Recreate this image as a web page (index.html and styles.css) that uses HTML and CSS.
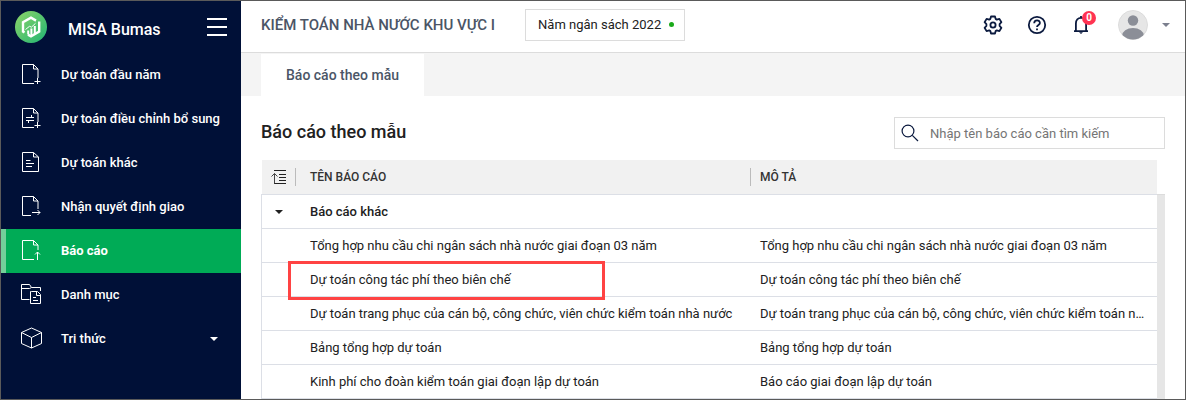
FILE: index.html
```html
<!DOCTYPE html>
<html lang="vi">
<head>
    <meta charset="UTF-8">
    <title>MISA Bumas - Báo cáo</title>
    <meta name="viewport" content="width=device-width, initial-scale=1.0">
    <link rel="stylesheet" href="styles.css">
</head>
<body>
    <div class="app">
        <!-- Sidebar -->
        <aside class="sidebar">
            <div class="brand">
                <svg class="logo" width="32" height="32" viewBox="0 0 32 32">
                    <defs>
                        <linearGradient id="logo-bg" x1="0" y1="0" x2="1" y2="1">
                            <stop offset="0" stop-color="#8fd468"/>
                            <stop offset="1" stop-color="#1fb574"/>
                        </linearGradient>
                    </defs>
                    <circle cx="16" cy="16" r="16" fill="url(#logo-bg)"/>
                    <g fill="none" stroke="#fff">
                        <path d="M9.5 21.5L8 20.6V11.3L16 6.7l5 2.9M24.2 10.5v10.1L16 25.3l-3-1.7" stroke-width="2.4"/>
                        <path d="M13.2 19.5v4M16.4 17.5v7.5M19.8 15v8" stroke-width="2"/>
                        <path d="M10.5 18.5l4-3.2 2 .8 4-3.8" stroke-width="1"/>
                    </g>
                </svg>
                <span class="brand-name">MISA Bumas</span>
                <button class="menu-toggle" type="button" aria-label="Menu">
                    <svg width="20" height="20" viewBox="0 0 20 20" stroke="#fff" stroke-width="2"><path d="M0 2h20M0 10h20M0 18h20"/></svg>
                </button>
            </div>
            <nav class="nav">
                <a class="nav-item" href="#">
                    <svg class="nav-icon" viewBox="0 0 22 22"><path d="M13 20.5H1.5v-19h11L17 6v9M12.5 1.5V6H17M16.5 15v6M13.5 18.5h6"/></svg>
                    <span>Dự toán đầu năm</span>
                </a>
                <a class="nav-item" href="#">
                    <svg class="nav-icon" viewBox="0 0 22 22"><path d="M13 20.5H1.5v-19h11L17 6v9M12.5 1.5V6H17M16.5 15v6M13.5 18.5h6M5 10.5h8M10.5 8v2.5M13 13.5H5M7.5 13.5V16"/></svg>
                    <span>Dự toán điều chỉnh bổ sung</span>
                </a>
                <a class="nav-item" href="#">
                    <svg class="nav-icon" viewBox="0 0 22 22"><path d="M1.5 1.5h11L17.5 6v14.5h-16zM12.5 1.5V6h5M5 9.5h4.5M5 12.5h8M5 15.5h6"/></svg>
                    <span>Dự toán khác</span>
                </a>
                <a class="nav-item" href="#">
                    <svg class="nav-icon" viewBox="0 0 22 22"><path d="M10 20.5H1.5v-19h11L17 6v8M12.5 1.5V6H17M11 17.5h8M16.5 15l2.5 2.5-2.5 2.5"/></svg>
                    <span>Nhận quyết định giao</span>
                </a>
                <a class="nav-item active" href="#">
                    <svg class="nav-icon" viewBox="0 0 22 22"><path d="M13 20.5H1.5v-19h11L17 6v5M12.5 1.5V6H17M16.5 21v-8M14 15.5l2.5-2.5 2.5 2.5"/></svg>
                    <span>Báo cáo</span>
                </a>
                <a class="nav-item" href="#">
                    <svg class="nav-icon" viewBox="0 0 22 22"><path d="M8.5 16.5H.5v-15h8l2 3h9V8M.5 5.500h8l2-1M10.500 8.500h6l3 3v9h-10v-12zM15.500 8.500v4h4M12 14.500h3M12 17.500h5"/></svg>
                    <span>Danh mục</span>
                </a>
                <a class="nav-item" href="#">
                    <svg class="nav-icon" viewBox="0 0 22 22"><path d="M10.5 1L20.5 5.5v11L10.5 21 .5 16.5v-11zM.5 5.5l10 5 10-5M10.5 10.5V21"/></svg>
                    <span>Tri thức</span>
                    <i class="caret"></i>
                </a>
            </nav>
        </aside>

        <main class="main">
            <!-- Top bar -->
            <header class="topbar">
                <div class="org">KIỂM TOÁN NHÀ NƯỚC KHU VỰC I</div>
                <button class="year" type="button">Năm ngân sách 2022<i class="dot"></i></button>
                <div class="tools">
                    <button class="tool" type="button" aria-label="Thiết lập">
                        <svg width="20" height="20" viewBox="0 0 20 20" fill="none" stroke="#0b1a3f" stroke-width="1.8" stroke-linejoin="round">
                            <path d="M8 1.5h4l.6 2.4 1.2.7 2.6-.7 2 3.3-1.8 1.900v1.800l1.800 1.900-2 3.300-2.600-.700-1.200.700-.600 2.400H8l-.600-2.400-1.200-.700-2.600.700-2-3.300 1.800-1.900V9.100L1.600 7.200l2-3.300 2.600.700 1.200-.700z"/>
                            <circle cx="10" cy="10" r="2.6"/>
                        </svg>
                    </button>
                    <button class="tool" type="button" aria-label="Trợ giúp">
                        <svg width="20" height="20" viewBox="0 0 20 20" fill="none" stroke="#0b1a3f" stroke-width="1.8">
                            <circle cx="10" cy="10" r="8.2"/>
                            <path d="M7.2 8.3C7.2 4.3 12.9 4.5 12.9 8c0 2-2.9 2-2.9 4M10 13.4v1.8"/>
                        </svg>
                    </button>
                    <button class="tool" type="button" aria-label="Thông báo">
                        <svg width="20" height="20" viewBox="0 0 20 20" fill="none" stroke="#0b1a3f" stroke-width="1.8">
                            <path d="M3 16.1h14M4.9 16V8.5C4.9 5 7 2.9 10 2.9s5.1 2.1 5.1 5.6V16M10 3V1"/>
                            <path d="M8 17.3h4L10 19z" fill="#0b1a3f" stroke="none"/>
                        </svg>
                        <span class="badge">0</span>
                    </button>
                    <button class="user" type="button" aria-label="Tài khoản">
                        <svg width="30" height="30" viewBox="0 0 30 30">
                            <defs><clipPath id="face"><circle cx="15" cy="15" r="14.5"/></clipPath></defs>
                            <circle cx="15" cy="15" r="14.5" fill="#e6e6e6" stroke="#dcdcdc"/>
                            <g fill="#8b8e97" clip-path="url(#face)">
                                <circle cx="15" cy="10.5" r="5.2"/>
                                <ellipse cx="15" cy="26" rx="11" ry="8"/>
                            </g>
                        </svg>
                        <i class="caret"></i>
                    </button>
                </div>
            </header>

            <div class="tabs">
                <a class="tab" href="#">Báo cáo theo mẫu</a>
            </div>

            <section class="content">
                <div class="content-head">
                    <h1>Báo cáo theo mẫu</h1>
                    <label class="search">
                        <svg width="18" height="18" viewBox="0 0 18 18" fill="none" stroke="#0b1a3f" stroke-width="1.2">
                            <circle cx="7" cy="7" r="5.9"/>
                            <path d="M11.3 11.3L17 17"/>
                        </svg>
                        <input type="text" placeholder="Nhập tên báo cáo cần tìm kiếm" aria-label="Tìm kiếm báo cáo">
                    </label>
                </div>

                <div class="grid">
                    <div class="grid-body">
                        <table class="reports">
                            <colgroup>
                                <col class="col-toggle">
                                <col class="col-name">
                                <col>
                            </colgroup>
                            <thead>
                                <tr>
                                    <th>
                                        <button class="collapse" type="button" aria-label="Thu gọn">
                                            <svg width="16" height="16" viewBox="0 0 16 16" fill="none" stroke="#222">
                                                <path d="M3 1.5h12M8 5.5h7M8 8.5h7M8 11.5h7M3 14.5h12"/>
                                                <path d="M3.5 14.5V4.5M.5 7.5l3-3 3 3" stroke="#444"/>
                                            </svg>
                                        </button>
                                    </th>
                                    <th><span>TÊN BÁO CÁO</span></th>
                                    <th><span>MÔ TẢ</span></th>
                                </tr>
                            </thead>
                            <tbody>
                                <tr class="group">
                                    <td><button class="collapse" type="button" aria-label="Báo cáo khác"><i class="caret"></i></button></td>
                                    <td>Báo cáo khác</td>
                                    <td></td>
                                </tr>
                                <tr>
                                    <td></td>
                                    <td>Tổng hợp nhu cầu chi ngân sách nhà nước giai đoạn 03 năm</td>
                                    <td>Tổng hợp nhu cầu chi ngân sách nhà nước giai đoạn 03 năm</td>
                                </tr>
                                <tr>
                                    <td></td>
                                    <td class="marked">Dự toán công tác phí theo biên chế</td>
                                    <td>Dự toán công tác phí theo biên chế</td>
                                </tr>
                                <tr>
                                    <td></td>
                                    <td>Dự toán trang phục của cán bộ, công chức, viên chức kiểm toán nhà nước</td>
                                    <td>Dự toán trang phục của cán bộ, công chức, viên chức kiểm toán nhà nước</td>
                                </tr>
                                <tr>
                                    <td></td>
                                    <td>Bảng tổng hợp dự toán</td>
                                    <td>Bảng tổng hợp dự toán</td>
                                </tr>
                                <tr>
                                    <td></td>
                                    <td>Kinh phí cho đoàn kiểm toán giai đoạn lập dự toán</td>
                                    <td>Báo cáo giai đoạn lập dự toán</td>
                                </tr>
                            </tbody>
                        </table>
                    </div>
                    <div class="scroll-track"></div>
                </div>
            </section>
        </main>
    </div>
</body>
</html>
```
FILE: styles.css
```css
*, *::after {
    box-sizing: border-box;
}

body {
    margin: 0;
    font-family: Roboto, "Liberation Sans", sans-serif;
    font-size: 13px;
    color: #212121;
    background: #fff;
}

button, input {
    font: inherit;
    color: inherit;
}

button {
    padding: 0;
    border: none;
    background: none;
    cursor: pointer;
}

a {
    color: inherit;
    text-decoration: none;
}

svg {
    display: block;
}

.app {
    display: flex;
    height: 100vh;
    border: 1px solid #5a5a5a;
    overflow: hidden;
}

.caret {
    width: 0;
    height: 0;
    border: 4px solid transparent;
    border-top-color: currentColor;
    border-bottom: 0;
}

/* Sidebar */
.sidebar {
    flex: 0 0 240px;
    min-width: 0;
    background: #001037;
    color: #fff;
}

.brand {
    display: flex;
    align-items: center;
    height: 52px;
    padding: 0 14px;
}

.brand-name {
    flex: 1;
    margin-left: 21px;
    padding-top: 4px;
    font-size: 16px;
    font-weight: 500;
}

.nav-item {
    display: flex;
    align-items: center;
    height: 44px;
    padding: 0 20px 0 15px;
    border-left: 5px solid transparent;
    font-weight: 500;
    white-space: nowrap;
}

.nav-item span {
    padding-bottom: 2px;
}

.nav-item.active {
    background: #00ab56;
    border-left-color: #73cf9a;
    font-weight: 700;
}

.nav-icon {
    flex-shrink: 0;
    width: 22px;
    height: 22px;
    margin: 0 18px 2px 0;
    fill: none;
    stroke: #fff;
}

.nav-item .caret {
    margin: 0 3px 0 auto;
}

/* Main area */
.main {
    flex: 1;
    min-width: 0;
    display: flex;
    flex-direction: column;
}

.topbar {
    display: flex;
    align-items: center;
    height: 52px;
    flex-shrink: 0;
    padding: 0 15px 4px 20px;
    border-bottom: 1px solid #dcdcdc;
}

.org {
    font-size: 15px;
    font-weight: 500;
    color: #4b5566;
}

.year {
    display: flex;
    align-items: center;
    gap: 8px;
    height: 32px;
    margin-left: 30px;
    padding: 0 10px 0 12px;
    border: 1px solid #dcdcdc;
}

.dot {
    width: 5px;
    height: 5px;
    border-radius: 50%;
    background: #1aaa1a;
}

.tools {
    display: flex;
    align-items: center;
    gap: 24px;
    margin-left: auto;
}

.tool {
    position: relative;
}

.badge {
    position: absolute;
    top: -4px;
    right: -5px;
    width: 14px;
    height: 14px;
    border-radius: 50%;
    background: #ff3352;
    color: #fff;
    font-size: 10px;
    font-weight: 700;
    line-height: 14px;
}

.user {
    display: flex;
    align-items: center;
    gap: 14px;
    margin-left: 3px;
    color: #7b7f8e;
}

.tabs {
    display: flex;
    flex-shrink: 0;
    height: 43px;
    padding: 1px 20px 0;
    background: #f4f4f4;
}

.tab {
    padding: 0 25px;
    background: #fff;
    color: #4b5566;
    font-size: 14px;
    font-weight: 500;
    line-height: 42px;
}

.content {
    flex: 1;
    min-height: 0;
    padding: 21px 20px 0;
}

.content-head {
    display: flex;
    align-items: center;
    justify-content: space-between;
    margin-bottom: 11px;
}

h1 {
    margin: 0;
    padding-bottom: 3px;
    font-size: 18px;
    font-weight: 500;
}

.search {
    display: flex;
    align-items: center;
    gap: 11px;
    width: 271px;
    height: 32px;
    padding: 0 6px;
    border: 1px solid #dcdcdc;
}

.search input {
    flex: 1;
    min-width: 0;
    padding: 0;
    border: none;
    outline: none;
}

.search input::placeholder {
    color: #757575;
}

/* Report table */
.grid {
    display: flex;
}

.grid-body {
    flex: 1;
    min-width: 0;
}

.reports {
    width: 100%;
    table-layout: fixed;
    border-collapse: separate;
    border-spacing: 0;
    border-bottom: 1px solid #dcdfe6;
}

.col-toggle {
    width: 34px;
}

.col-name {
    width: 455px;
}

th, td {
    height: 34px;
    padding: 0;
    text-align: left;
    white-space: nowrap;
}

th {
    background: #f1f1f1;
    color: #333;
    font-size: 12px;
    font-weight: 500;
}

th span {
    display: block;
    border-left: 1px solid #bbb;
    line-height: 18px;
}

td {
    border-top: 1px solid #dcdfe6;
}

th:first-child {
    border-left: 1px solid #fff;
}

td:first-child {
    border-left: 1px solid #dcdfe6;
}

th:nth-child(2) span {
    padding-left: 14px;
}

th:nth-child(3) span {
    padding-left: 9px;
}

td:nth-child(2) {
    padding-left: 15px;
}

td:nth-child(3) {
    padding: 0 10px;
    overflow: hidden;
    text-overflow: ellipsis;
}

.group {
    font-weight: 500;
}

.collapse {
    display: flex;
    justify-content: center;
    width: 100%;
}

/* Highlight frame around a report name */
.marked {
    position: relative;
}

.marked::after {
    content: "";
    position: absolute;
    top: -2px;
    left: -7px;
    width: 317px;
    height: 39px;
    border: 3px solid #ff4343;
}

.scroll-track {
    width: 8px;
    margin-top: 34px;
    border-top: 1px solid #dcdcdc;
    background: #e6e6e6;
}
```
